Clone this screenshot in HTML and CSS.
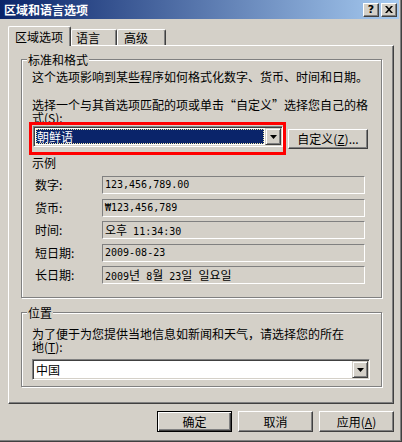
FILE: index.html
```html
<!DOCTYPE html>
<html lang="zh-CN">
<head>
    <meta charset="UTF-8">
    <title>区域和语言选项</title>
    <link rel="stylesheet" href="styles.css">
</head>
<body>
    <div class="window">
        <div class="titlebar">
            <span class="title">区域和语言选项</span>
            <span class="cap-btn help">?</span>
            <span class="cap-btn close">
                <svg width="8" height="7" viewBox="0 0 8 7">
                    <path d="M0 0h2l2 2.2L6 0h2L5 3.5 8 7H6L4 4.8 2 7H0l3-3.5z" fill="#000"/>
                </svg>
            </span>
        </div>

        <div class="tabs">
            <div class="tab active tab-region">区域选项</div>
            <div class="tab tab-lang">语言</div>
            <div class="tab tab-adv">高级</div>
        </div>

        <div class="panel">
            <div class="group group-format">
                <div class="group-title">标准和格式</div>
                <p class="intro">这个选项影响到某些程序如何格式化数字、货币、时间和日期。</p>
                <p class="hint">选择一个与其首选项匹配的项或单击“自定义”选择您自己的格<br>式(<u>S</u>):</p>

                <div class="locale-row">
                    <div class="mark">
                        <div class="combo combo-locale">
                            <div class="combo-value selected"><span>朝鲜语</span></div>
                            <div class="drop-btn">
                                <svg width="7" height="4" viewBox="0 0 7 4"><polygon points="0,0 7,0 3.5,4" fill="#000"/></svg>
                            </div>
                        </div>
                    </div>
                    <button class="btn btn-custom">自定义(<u>Z</u>)...</button>
                </div>

                <div class="sample-title">示例</div>
                <div class="samples">
                    <span class="sample-label">数字:</span>
                    <div class="field">123,456,789.00</div>
                    <span class="sample-label">货币:</span>
                    <div class="field">₩123,456,789</div>
                    <span class="sample-label">时间:</span>
                    <div class="field"><span class="ko" lang="ko">오후</span> 11:34:30</div>
                    <span class="sample-label">短日期:</span>
                    <div class="field">2009-08-23</div>
                    <span class="sample-label">长日期:</span>
                    <div class="field">2009<span class="ko" lang="ko">년</span> 8<span class="ko" lang="ko">월</span> 23<span class="ko" lang="ko">일</span> <span class="ko" lang="ko">일요일</span></div>
                </div>
            </div>

            <div class="group group-location">
                <div class="group-title">位置</div>
                <p class="loc-text">为了便于为您提供当地信息如新闻和天气，请选择您的所在<br>地(<u>T</u>):</p>
                <div class="combo combo-location">
                    <div class="combo-value">中国</div>
                    <div class="drop-btn">
                        <svg width="7" height="4" viewBox="0 0 7 4"><polygon points="0,0 7,0 3.5,4" fill="#000"/></svg>
                    </div>
                </div>
            </div>
        </div>

        <div class="actions">
            <button class="btn default">确定</button>
            <button class="btn">取消</button>
            <button class="btn">应用(<u>A</u>)</button>
        </div>
    </div>
</body>
</html>
```

FILE: styles.css
```css
* {
    box-sizing: border-box;
}

body {
    margin: 0;
    background-color: #d4d0c8;
    font-family: "Noto Sans CJK SC", sans-serif;
    font-size: 12px;
    color: #000;
}

p {
    margin: 0;
}

u {
    display: inline-block;
    height: 13px;
    line-height: 13px;
    text-underline-offset: 1px;
}

.window {
    width: 402px;
    height: 442px;
    padding: 0 2px 2px 0;
    border-right: 1px solid #404040;
    border-bottom: 1px solid #404040;
    box-shadow: inset -1px -1px #808080;
}

/* title bar */
.titlebar {
    height: 19px;
    display: flex;
    align-items: center;
    padding: 0 2px 0 4px;
    background: linear-gradient(to right, #0a246a, #a6caf0);
}

.title {
    flex: 1;
    color: #fff;
    font-weight: bold;
    line-height: 13px;
}

.cap-btn {
    width: 16px;
    height: 14px;
    display: flex;
    align-items: center;
    justify-content: center;
    background-color: #d4d0c8;
    border: 1px solid;
    border-color: #fff #404040 #404040 #fff;
    box-shadow: inset -1px -1px #808080;
}

.cap-btn.help {
    margin-right: 2px;
    font: bold 11px "DejaVu Sans", sans-serif;
    line-height: 12px;
}

/* tabs */
.tabs {
    height: 19px;
    margin-top: 7px;
    padding-left: 8px;
    display: flex;
    align-items: flex-end;
}

.tab {
    height: 16px;
    padding-top: 1px;
    line-height: 13px;
    background-color: #d4d0c8;
    border: 1px solid;
    border-bottom: 0;
    border-color: #fff #404040 #d4d0c8 #fff;
    border-radius: 2px 2px 0 0;
    box-shadow: inset -1px 0 #808080;
}

.tab.active {
    height: 20px;
    padding-top: 3px;
    margin-bottom: -1px;
    position: relative;
    z-index: 1;
}

.tab-region { width: 63px; padding-left: 6px; }
.tab-lang { width: 46px; padding-left: 4px; }
.tab-adv { width: 49px; padding-left: 6px; }

/* tab page */
.panel {
    width: 386px;
    height: 359px;
    margin-left: 8px;
    padding: 13px 11px 0 12px;
    border: 1px solid;
    border-color: #fff #404040 #404040 #fff;
    box-shadow: inset -1px -1px #808080;
}

.group {
    border: 1px solid #808080;
    box-shadow: inset 1px 1px #fff, 1px 1px #fff;
    padding: 0 10px 13px 10px;
}

.group-location {
    margin-top: 14px;
    padding-bottom: 6px;
}

.group-title {
    display: table;
    margin: -7px 0 0 -5px;
    padding: 0 1px;
    line-height: 13px;
    background-color: #d4d0c8;
}

.intro {
    margin-top: 4px;
    line-height: 13px;
}

.hint {
    margin-top: 15px;
    line-height: 13px;
}

.loc-text {
    margin-top: 8px;
    line-height: 13px;
}

/* combo boxes */
.locale-row {
    display: flex;
    align-items: flex-start;
    margin: -2px 0 0 -3px;
}

.mark {
    border: 3px solid #ff0000;
    padding: 1px 0 5px 1px;
}

.combo {
    height: 21px;
    display: flex;
    padding: 1px;
    background-color: #fff;
    border: 1px solid;
    border-color: #808080 #fff #fff #808080;
    box-shadow: inset 1px 1px #404040, inset -1px -1px #d4d0c8;
}

.combo-locale {
    width: 250px;
}

.combo-location {
    width: 338px;
    margin-top: 6px;
}

.combo-value {
    flex: 1;
    padding-left: 2px;
    line-height: 17px;
}

.combo-value.selected {
    margin: 1px;
    padding-left: 0;
    line-height: 13px;
    color: #fff;
    background-color: #0a246a;
    border: 1px dotted #f0e6a8;
}

.drop-btn {
    width: 16px;
    display: flex;
    align-items: center;
    justify-content: center;
    background-color: #d4d0c8;
    border: 1px solid;
    border-color: #d4d0c8 #404040 #404040 #d4d0c8;
    box-shadow: inset 1px 1px #fff, inset -1px -1px #808080;
}

/* push buttons */
.btn {
    width: 75px;
    height: 21px;
    padding: 0;
    font: inherit;
    line-height: 17px;
    color: #000;
    background-color: #d4d0c8;
    border: 1px solid;
    border-color: #fff #404040 #404040 #fff;
    box-shadow: inset -1px -1px #808080;
}

.btn.default {
    border-color: #000;
    box-shadow: inset 1px 1px #fff, inset -1px -1px #404040, inset -2px -2px #808080;
}

.btn-custom {
    width: 80px;
    height: 20px;
    margin: 7px 0 0 2px;
    line-height: 16px;
}

/* sample fields */
.sample-title {
    margin-top: 1px;
    line-height: 13px;
}

.samples {
    display: grid;
    grid-template-columns: 67px 263px;
    grid-auto-rows: 18px;
    row-gap: 4.5px;
    margin-top: 7px;
    padding-left: 3px;
}

.sample-label {
    line-height: 18px;
}

.field {
    padding-left: 2px;
    font-family: "DejaVu Sans Mono", monospace;
    font-size: 10px;
    line-height: 16px;
    white-space: nowrap;
    border: 1px solid;
    border-color: #808080 #fff #fff #808080;
}

.ko {
    font-family: "Noto Sans CJK KR", sans-serif;
    font-size: 12px;
}

.actions {
    display: flex;
    justify-content: flex-end;
    gap: 6px;
    margin-top: 7px;
    padding-right: 5px;
}
```
